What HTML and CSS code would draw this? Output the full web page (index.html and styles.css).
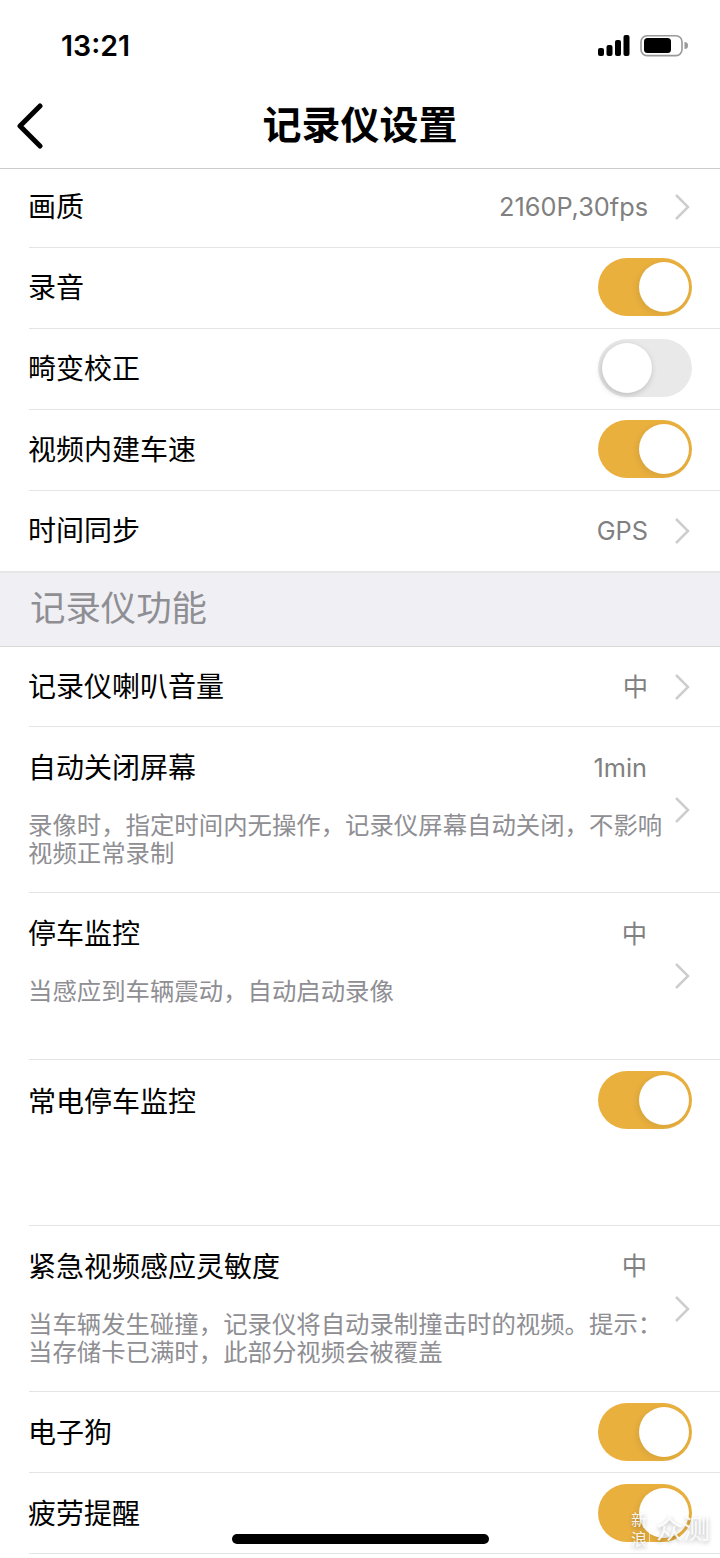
FILE: index.html
```html
<!DOCTYPE html>
<html lang="zh-CN">
<head>
  <meta charset="UTF-8" />
  <meta name="viewport" content="width=device-width, initial-scale=1.0"/>
  <title>记录仪设置</title>
  <link rel="stylesheet" href="styles.css">
</head>
<body>
  <div class="page">
    <div class="status">
      <span class="time">13:21</span>
      <svg class="status-icons" width="90" height="24" viewBox="0 0 90 24">
        <rect x="0" y="13" width="6" height="8" rx="2" fill="#000"/>
        <rect x="8.500" y="10" width="6" height="11" rx="2" fill="#000"/>
        <rect x="17" y="5" width="6" height="16" rx="2" fill="#000"/>
        <rect x="25.500" y="0" width="6" height="21" rx="2" fill="#000"/>
        <rect x="43" y="0.800" width="41" height="19.800" rx="6" fill="none" stroke="#999" stroke-width="1.600"/>
        <rect x="46" y="3" width="27" height="15" rx="3.500" fill="#000"/>
        <path d="M86.500 7 a3.500 3.500 0 0 1 0 7 z" fill="#999"/>
      </svg>
    </div>

    <header class="nav">
      <svg class="back" width="28" height="46" viewBox="0 0 28 46">
        <path d="M24 3 L4 23 L24 43" fill="none" stroke="#000" stroke-width="5" stroke-linecap="round" stroke-linejoin="round"/>
      </svg>
      <h1>记录仪设置</h1>
    </header>

    <div class="group basic">
      <div class="row first">
        <span class="label">画质</span>
        <span class="value">2160P,30fps</span>
        <svg class="chev" width="16" height="28" viewBox="0 0 16 28"><path d="M2 2 L14 14 L2 26" fill="none" stroke="#cdcdcd" stroke-width="2.500"/></svg>
      </div>
      <div class="row">
        <span class="label">录音</span>
        <span class="switch on"></span>
      </div>
      <div class="row">
        <span class="label">畸变校正</span>
        <span class="switch"></span>
      </div>
      <div class="row">
        <span class="label">视频内建车速</span>
        <span class="switch on"></span>
      </div>
      <div class="row last">
        <span class="label">时间同步</span>
        <span class="value">GPS</span>
        <svg class="chev" width="16" height="28" viewBox="0 0 16 28"><path d="M2 2 L14 14 L2 26" fill="none" stroke="#cdcdcd" stroke-width="2.500"/></svg>
      </div>
    </div>

    <div class="section">记录仪功能</div>

    <div class="group func">
      <div class="row short">
        <span class="label">记录仪喇叭音量</span>
        <span class="value">中</span>
        <svg class="chev" width="16" height="28" viewBox="0 0 16 28"><path d="M2 2 L14 14 L2 26" fill="none" stroke="#cdcdcd" stroke-width="2.500"/></svg>
      </div>
      <div class="row tall">
        <div class="tall-main">
          <div class="tall-top">
            <span class="label">自动关闭屏幕</span>
            <span class="value">1min</span>
          </div>
          <p class="desc">录像时，指定时间内无操作，记录仪屏幕自动关闭，不影响视频正常录制</p>
        </div>
        <svg class="chev" width="16" height="28" viewBox="0 0 16 28"><path d="M2 2 L14 14 L2 26" fill="none" stroke="#cdcdcd" stroke-width="2.500"/></svg>
      </div>
      <div class="row tall">
        <div class="tall-main">
          <div class="tall-top">
            <span class="label">停车监控</span>
            <span class="value">中</span>
          </div>
          <p class="desc">当感应到车辆震动，自动启动录像</p>
        </div>
        <svg class="chev" width="16" height="28" viewBox="0 0 16 28"><path d="M2 2 L14 14 L2 26" fill="none" stroke="#cdcdcd" stroke-width="2.500"/></svg>
      </div>
      <div class="row tall top">
        <span class="label">常电停车监控</span>
        <span class="switch on"></span>
      </div>
      <div class="row tall">
        <div class="tall-main">
          <div class="tall-top">
            <span class="label">紧急视频感应灵敏度</span>
            <span class="value">中</span>
          </div>
          <p class="desc">当车辆发生碰撞，记录仪将自动录制撞击时的视频。提示：当存储卡已满时，此部分视频会被覆盖</p>
        </div>
        <svg class="chev" width="16" height="28" viewBox="0 0 16 28"><path d="M2 2 L14 14 L2 26" fill="none" stroke="#cdcdcd" stroke-width="2.500"/></svg>
      </div>
      <div class="row">
        <span class="label">电子狗</span>
        <span class="switch on"></span>
      </div>
      <div class="row">
        <span class="label">疲劳提醒</span>
        <span class="switch on"></span>
      </div>
    </div>

    <div class="home-bar"></div>
    <div class="watermark">
      <span class="wm-small">新<br>浪</span>
      <span class="wm-big">众测</span>
    </div>
  </div>
</body>
</html>
```

FILE: styles.css
```css
* { box-sizing: border-box; }
body { margin: 0; background: #fff; font-family: "Liberation Sans", "Noto Sans CJK SC", sans-serif; color: #000; }
.page { position: relative; width: 720px; height: 1558px; overflow: hidden; background: #fff; }

.status { height: 84px; display: flex; justify-content: space-between; padding: 27px 32px 0 61px; }
.time { font-family: Inter, sans-serif; font-size: 28.500px; font-weight: 600; line-height: 38px; }
.status-icons { margin-top: 8px; }

.nav { height: 85px; display: flex; align-items: center; justify-content: center; position: relative; border-bottom: 1px solid #cccccc; }
.nav h1 { margin: 0; font-size: 39px; font-weight: 700; line-height: 50px; }
.back { position: absolute; left: 16px; top: 19px; }

.row { height: 81px; margin-left: 29px; padding-right: 31px; display: flex; align-items: center; border-bottom: 1px solid #e4e4e4; }
.row.first { height: 79px; padding-bottom: 2px; }
.row.short { height: 80px; }
.row.last { margin-left: 0; padding-left: 29px; height: 82px; border-bottom: 2px solid #e6e6e6; }
.row.tall { height: 166.330px; }
.row.tall.top { align-items: flex-start; padding-right: 28px; padding-top: 11px; }
.row.tall.top .label { line-height: 58px; }

.label { flex: 1; margin-left: -1px; margin-top: 3px; font-size: 28px; line-height: 40px; }
.basic .label { margin-top: 1px; }
.value { font-family: Inter, "Noto Sans CJK SC", sans-serif; font-size: 25.300px; color: #808080; line-height: 40px; }
.chev { flex: none; margin-left: 26px; margin-right: -1px; }

.tall-main { flex: 1; min-width: 0; display: flex; flex-direction: column; align-self: flex-start; }
.tall-top { display: flex; align-items: center; height: 81px; padding-right: 15px; }
.desc { margin: 4px -11px 0 -1px; font-size: 24.400px; line-height: 28px; color: #8e8e93; }
.row.tall > .chev { margin-left: 12px; margin-right: -1px; }

.switch { position: relative; width: 94px; height: 58px; margin-top: -2px; margin-right: -3px; border-radius: 29px; background: #e9e9ea; flex: none; }
.func .switch { margin-top: 0; }
.row.tall.top .switch { margin-right: 0; }
.switch::after { content: ""; position: absolute; left: 4px; top: 4px; width: 50px; height: 50px; border-radius: 50%; background: #fff; box-shadow: -1px 2px 6px rgba(0,0,0,.2); }
.switch.on { background: #e9b03e; }
.switch.on::after { left: 41px; box-shadow: -2px 2px 6px rgba(0,0,0,.08); }

.section { height: 74px; background: #efeff4; border-bottom: 1px solid #d9d9d9; padding-left: 30px; font-size: 35.400px; line-height: 72px; color: #8e8e93; }

.home-bar { position: absolute; left: 232px; top: 1534px; width: 257px; height: 10px; border-radius: 5px; background: #000; }

.watermark { position: absolute; left: 631px; top: 1511px; display: flex; align-items: center; gap: 6px; color: rgba(255,255,255,.9); text-shadow: 0 2px 4px rgba(0,0,0,.3); }
.wm-small { font-size: 16px; line-height: 19px; padding-right: 2px; border-right: 1px solid rgba(255,255,255,.6); }
.wm-big { font-size: 27px; line-height: 38px; }
```
